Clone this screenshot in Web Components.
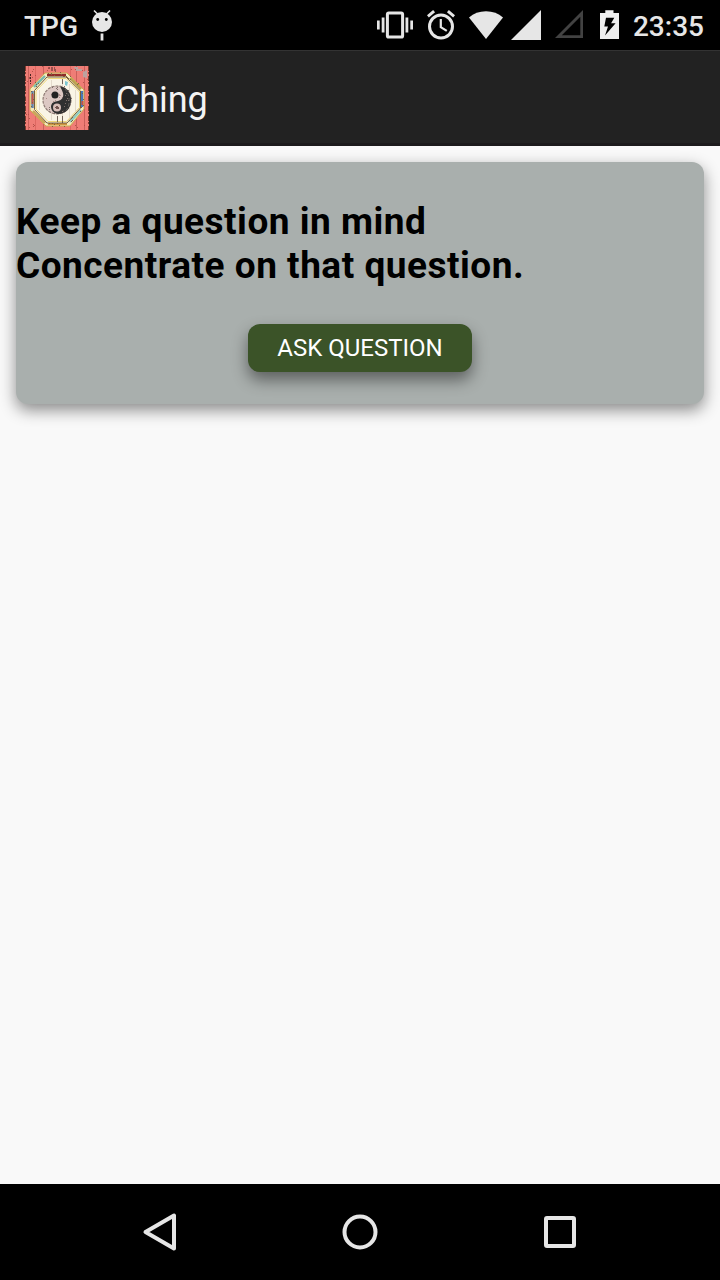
<!DOCTYPE html>
<html lang="en">
<head>
<meta charset="utf-8">
<title>I Ching</title>
<style>
  html, body {
    margin: 0;
    height: 100%;
  }
  body {
    font-family: Roboto, "Liberation Sans", sans-serif;
    background-color: #f9f9f9;
    overflow: hidden;
  }
</style>
</head>
<body>
<phone-screen>
  <status-bar slot="status" carrier="TPG" time="23:35"></status-bar>
  <app-header slot="header">I Ching</app-header>
  <question-card>
    Keep a question in mind<br>Concentrate on that question.
    <ask-button slot="action">ASK QUESTION</ask-button>
  </question-card>
  <nav-bar slot="nav"></nav-bar>
</phone-screen>

<script>
class PhoneScreen extends HTMLElement {
  constructor() {
    super();
    this.attachShadow({ mode: "open" }).innerHTML = /*html*/`
<style>
  :host {
    display: flex;
    flex-direction: column;
    height: 1280px;
    width: 720px;
  }
  main {
    flex: 1;
    padding: 16px;
    background-color: #f9f9f9;
  }
</style>
<slot name="status"></slot>
<slot name="header"></slot>
<main><slot></slot></main>
<slot name="nav"></slot>
`;
  }
}
customElements.define('phone-screen', PhoneScreen);

class StatusBar extends HTMLElement {
  constructor() {
    super();
    this.attachShadow({ mode: "open" }).innerHTML = getStatusHTML();
  }

  connectedCallback() {
    const select = selector => this.shadowRoot.querySelector(selector);
    select('#carrier').textContent = this.getAttribute('carrier');
    select('#time').textContent = this.getAttribute('time');
  }
}
customElements.define('status-bar', StatusBar);

// Every icon is as tall as the bar, its viewBox starts at its place in the bar
function getStatusHTML() {
  return /*html*/`
<style>
  :host {
    display: flex;
    justify-content: space-between;
    height: 50px;
    padding: 0 16px 0 24px;
    box-sizing: border-box;
    background-color: #000;
    color: #e6e6e6;
    font-size: 28px;
    font-weight: 500;
    line-height: 54px;
  }
  div {
    display: flex;
  }
  #left {
    gap: 13px;
  }
  #right {
    gap: 14px;
  }
  svg {
    display: block;
    height: 50px;
    fill: #e6e6e6;
  }
  .line {
    fill: none;
    stroke: #e6e6e6;
    stroke-width: 3;
  }
  .signal {
    margin-left: -6px;
  }
  .battery {
    margin-left: 3px;
  }
</style>
<div id="left">
  <span id="carrier"></span>
  <svg width="22" viewBox="91 0 22 50">
    <circle cx="102" cy="22" r="10"/>
    <path d="M94 10.5l4 4M110 10.5l-4 4" stroke="#e6e6e6" stroke-width="1.6"/>
    <path d="M100.6 33.5h2.8v7h-2.8z"/>
    <circle cx="97.7" cy="19.5" r="1.4" fill="#000"/>
    <circle cx="106.3" cy="19.5" r="1.4" fill="#000"/>
  </svg>
</div>
<div id="right">
  <svg width="36" viewBox="377 0 36 50">
    <rect class="line" x="387.4" y="12.9" width="15.2" height="24.2" rx="1.4"/>
    <path d="M377 20.5h2.7v9H377zM381.7 17.5h2.8v15h-2.8zM405.5 17.5h2.8v15h-2.8zM410.3 20.5h2.7v9h-2.7z"/>
  </svg>
  <svg width="28" viewBox="427 0 28 50">
    <circle class="line" cx="441" cy="26.5" r="11.5"/>
    <path class="line" d="M427.9 16.4l6.2-5.2M454.1 16.4l-6.2-5.2"/>
    <path class="line" d="M440.8 19v8.2l6 3.7" style="stroke-width:2.2"/>
  </svg>
  <svg width="34" viewBox="469 0 34 50">
    <path d="M486 39L469 17.4Q476 11.3 486 11.3T503 17.4z"/>
  </svg>
  <svg class="signal" width="30" viewBox="511 0 30 50">
    <path d="M541 10v30h-30z"/>
  </svg>
  <svg width="28" viewBox="555 0 28 50">
    <path d="M583 10v28h-28zM580.3 16.7L561.8 35.3h18.5z" fill="#424242" fill-rule="evenodd"/>
  </svg>
  <svg class="battery" width="19" viewBox="600 0 19 50">
    <path d="M605.3 10.3h8.2v2.8h5.5V39H600V13.1h5.3z" fill="#eee"/>
    <path d="M606 17.7h8.300l-3.200 5.500h4.500L605 35.500l3-8.900h-3.700z" fill="#000"/>
  </svg>
  <span id="time"></span>
</div>
`;
}

class AppHeader extends HTMLElement {
  constructor() {
    super();
    this.attachShadow({ mode: "open" }).innerHTML = /*html*/`
<style>
  :host {
    display: flex;
    align-items: center;
    gap: 8px;
    height: 96px;
    padding: 2px 25px 0;
    box-sizing: border-box;
    border-top: 1px solid #333;
    border-bottom: 3px solid #1c1a1c;
    background-color: #222;
    color: #f3f3f3;
    font-size: 36px;
    line-height: 42px;
  }
  span {
    padding-top: 4px;
  }
</style>
<bagua-icon></bagua-icon>
<span><slot></slot></span>
`;
  }
}
customElements.define('app-header', AppHeader);

class BaguaIcon extends HTMLElement {
  constructor() {
    super();
    this.attachShadow({ mode: "open" }).innerHTML = getBaguaHTML();
    const select = selector => this.shadowRoot.querySelector(selector);
    // worn paint: count, radius from, radius to, seed
    select('#wear-wall').setAttribute('d', this.specks(45, 30, 44, 7));
    select('#wear-frame').setAttribute('d', this.specks(50, 23, 28, 3));
    select('#wear-dark').setAttribute('d', this.specks(22, 9, 15, 19));
    select('#wear-pink').setAttribute('d', this.specks(22, 2, 14, 31));
  }

  specks(count, from, to, seed) {
    let d = '';
    const next = () => (seed = (seed * 16807) % 2147483647) / 2147483647;
    next();
    next();
    for (let i = 0; i < count; i++) {
      const angle = next() * Math.PI * 2;
      const radius = from + next() * (to - from);
      const x = Math.round(32 + Math.cos(angle) * radius);
      const y = Math.round(33 + Math.sin(angle) * radius);
      d += `M${x} ${y}h1v1h-1z`;
    }
    return d;
  }
}
customElements.define('bagua-icon', BaguaIcon);

function getBaguaHTML() {
  return /*html*/`
<style>
  :host {
    display: block;
    width: 64px;
    height: 64px;
  }
  svg {
    display: block;
  }
</style>
<svg width="64" height="64" viewBox="0 0 64 64">
  <rect width="64" height="64" fill="#ef7d76"/>
  <path d="M3.5 0v64M18.5 0v64M51.5 0v64M59.5 0v64" stroke="#c9605a"/>
  <path d="M10.5 0v64M45.5 0v64" stroke="#de6862"/>
  <path d="M.5 0v64M63.5 0v64" stroke="#7a3a2c" stroke-dasharray="5 1 2 2"/>
  <path d="M5.5 8v10M4 12h2M23 2h7M26 4h5" stroke="#4a2522" stroke-dasharray="2 1"/>
  <path d="M49 1h4v2h4v2h-6zM58 6l4-2v8l-4-1z" fill="#bca29f"/>
  <path id="wear-wall" fill="#b5524b"/>
  <path d="M5 23L20 7h22l17 17v19L45 60H21L5 44z" fill="#f5e9bd" stroke="#cbb050"/>
  <g fill="none" stroke-width="2.4">
    <path d="M22 9h19" stroke="#8f2b29"/>
    <path d="M45 12l11 11" stroke="#b99f4f"/>
    <path d="M57 25v16" stroke="#4778bd"/>
    <path d="M56 44L45 56" stroke="#8fcdc4"/>
    <path d="M42 58H23" stroke="#cf9743"/>
    <path d="M20 57L8 45" stroke="#c9a35a"/>
    <path d="M7.500 42V25" stroke="#6080ab"/>
    <path d="M9 21L20 10" stroke="#79b8ae"/>
  </g>
  <path d="M7.500 28v10M57.5 35v4" stroke="#c95443" stroke-width="2"/>
  <path id="wear-frame" fill="#7d6440"/>
  <path d="M9.500 24.500L22 11h19l14.500 14v17L42 57H22L9.500 43.500z" fill="#f9f4e6" stroke="#77603a"/>
  <path d="M11 25L23 12.500h18L54.500 26v15.500L41.500 55.500H23L11 43z" fill="none" stroke="#efd878"/>
  <path d="M14.5 24v20M26.5 14v40M37.5 14v40M44.5 18v34M50.5 24v22" stroke="#ddd3c4" stroke-width=".8"/>
  <path d="M37.5 13v5M37.500 50v7M32.5 50v6" stroke="#57463c" stroke-width=".8"/>
  <path d="M40 15l3 1-1 4-2-1z" fill="#7cc5cf"/>
  <circle cx="32" cy="34" r="14" fill="#dcc8c3" stroke="#8d7a73" stroke-width="1.2" stroke-dasharray="3 1"/>
  <path id="wear-pink" fill="#b08d8b"/>
  <path d="M35 20.500C42 21 46 27 46 34 46 43 40 48 33 48 28 47 26 44 26 40 27 36 30 35.500 33 35 37 34 39 31 38 27 37 24 36 22 35 20.500z" fill="#303030"/>
  <path d="M40 23q5 6 4 14t-6 8" fill="none" stroke="#605d58" stroke-dasharray="3 2"/>
  <path id="wear-dark" fill="#7f706a"/>
  <circle cx="30" cy="29" r="3.500" fill="#222"/>
  <circle cx="32" cy="41.500" r="4" fill="#d8beb8"/>
  <path d="M31 40h2v1h1v2h-3v-1h-1v-1h1z" fill="#71534f"/>
</svg>
`;
}

class QuestionCard extends HTMLElement {
  constructor() {
    super();
    this.attachShadow({ mode: "open" }).innerHTML = /*html*/`
<style>
  :host {
    display: flex;
    flex-direction: column;
    align-items: center;
    height: 242px;
    padding: 38px 0 32px;
    box-sizing: border-box;
    border-radius: 12px;
    background-color: #a9afad;
    box-shadow: 0 6px 16px rgba(0, 0, 0, .45);
  }
  h3 {
    align-self: stretch;
    flex: 1;
    margin: 0;
    color: #000;
    font-size: 37px;
    font-weight: 700;
    line-height: 44px;
    letter-spacing: .5px;
  }
</style>
<h3><slot></slot></h3>
<slot name="action"></slot>
`;
  }
}
customElements.define('question-card', QuestionCard);

class AskButton extends HTMLElement {
  constructor() {
    super();
    this.attachShadow({ mode: "open" }).innerHTML = /*html*/`
<style>
  :host {
    display: block;
  }
  button {
    display: block;
    width: 224px;
    height: 48px;
    padding: 0;
    border: 0;
    border-radius: 12px;
    background-color: #3b5328;
    color: #fff;
    font: 24px/48px Roboto, "Liberation Sans", sans-serif;
    box-shadow: 0 8px 16px rgba(0, 0, 0, .45);
  }
</style>
<button type="button"><slot></slot></button>
`;
  }
}
customElements.define('ask-button', AskButton);

class NavBar extends HTMLElement {
  constructor() {
    super();
    this.attachShadow({ mode: "open" }).innerHTML = /*html*/`
<style>
  :host {
    display: flex;
    justify-content: center;
    align-items: center;
    gap: 160px;
    height: 96px;
    background-color: #000;
  }
  svg {
    display: block;
    width: 40px;
    height: 40px;
    fill: none;
    stroke: #e6e6e6;
    stroke-width: 4;
    stroke-linejoin: round;
  }
</style>
<svg viewBox="0 0 40 40"><path d="M34 3.5v33L5.5 20z"/></svg>
<svg viewBox="0 0 40 40"><circle cx="20" cy="20" r="15.5"/></svg>
<svg viewBox="0 0 40 40"><rect x="6" y="6" width="28" height="28" rx="1"/></svg>
`;
  }
}
customElements.define('nav-bar', NavBar);
</script>
</body>
</html>
